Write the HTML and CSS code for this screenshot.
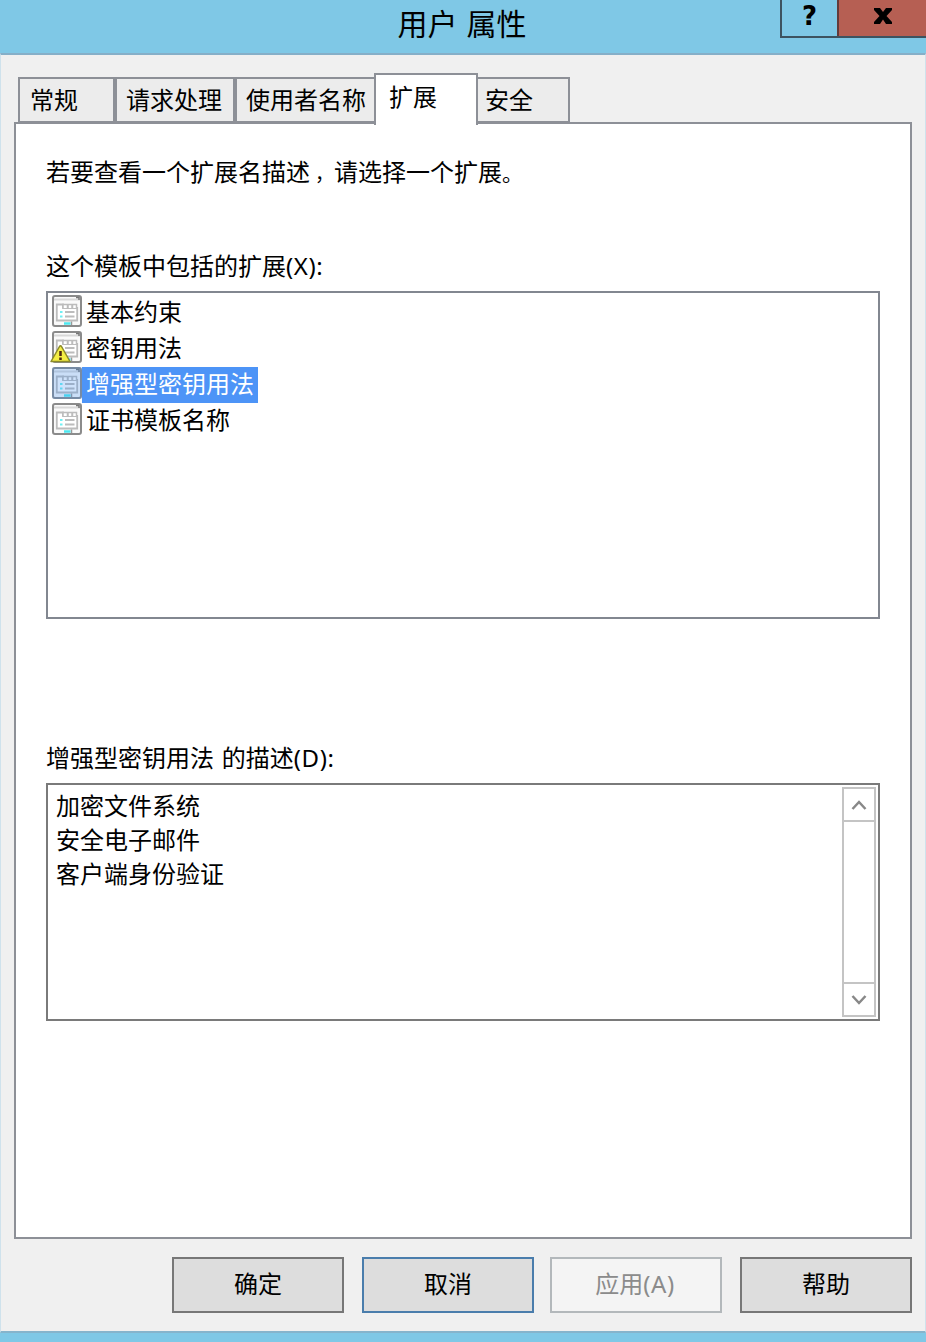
FILE: index.html
```html
<!DOCTYPE html>
<html lang="zh-CN">
	<head>
		<meta charset="utf-8">
		<title>用户 属性</title>
		<link rel="stylesheet" href="styles.css">
	</head>
	<body>
		<!-- shared list icon -->
		<svg class="defs" width="0" height="0">
			<symbol id="ext" viewBox="0 0 30 32">
				<rect x="1" y="1" width="28" height="30" rx="2" fill="#fafafa" stroke="#8b8b8b" stroke-width="2"/>
				<path d="M2 4.500H28" stroke="#d8d8d8" stroke-width="2"/>
				<path d="M24 2.500H27V5" fill="none" stroke="#777" stroke-width="1.500"/>
				<path d="M4.800 9.500H11V13H25.200V25.500H4.800Z" fill="#fff" stroke="#bcbcbc" stroke-width="1.800"/>
				<path d="M11 13V9.500H15.500V13M16 13V9.500H20V13M20.500 13V9.500H24.500V13" fill="#fff" stroke="#bcbcbc" stroke-width="1.500"/>
				<path d="M13 17H22.500M13 21.500H22.500" stroke="#bcbcbc" stroke-width="1.800"/>
				<path d="M8 17H10.500M8 21.500H10.500" stroke="#6ff0f4" stroke-width="2"/>
				<path d="M19.500 26.500V30" stroke="#999" stroke-width="1.500"/>
				<path d="M12 28.500H18.500" stroke="#4ce8f0" stroke-width="2.500"/>
			</symbol>
		</svg>
		<div class="window">
			<div class="titlebar">
				<h1 class="title">用户 属性</h1>
				<div class="controls">
					<button class="ctl help">?</button>
					<button class="ctl close"><svg width="20" height="18" viewBox="0 0 20 18"><path d="M1 1H7L10 5L13 1H19V3L13.500 9L19 15V17H13L10 12.500L7 17H1V15L6.500 9L1 3Z" fill="#000"/></svg></button>
				</div>
			</div>
			<div class="client">
				<div class="tabs">
					<div class="tab general">常规</div>
					<div class="tab request">请求处理</div>
					<div class="tab subject">使用者名称</div>
					<div class="tab active">扩展</div>
					<div class="tab security">安全</div>
				</div>
				<div class="panel">
					<p class="intro">若要查看一个扩展名描述<span class="comma">，</span>请选择一个扩展<span class="stop">。</span></p>
					<p class="label">这个模板中包括的扩展<span class="key">(X):</span></p>
					<ul class="list">
						<li class="item"><svg class="icon"><use href="#ext"/></svg><span>基本约束</span></li>
						<li class="item"><svg class="icon"><use href="#ext"/><path d="M-1 30.500L7.500 15.500Q8.500 14 9.500 15.500L18 30.500Z" fill="#f4ee45" stroke="#8c8a2a" stroke-width="1.500" stroke-linejoin="round"/><path d="M8.500 20V25M8.500 26.500V29" stroke="#4b2810" stroke-width="2.500"/></svg><span>密钥用法</span></li>
						<li class="item selected"><svg class="icon"><use href="#ext"/><rect width="30" height="32" rx="2" fill="#3c8cf0" fill-opacity=".25"/></svg><span>增强型密钥用法</span></li>
						<li class="item"><svg class="icon"><use href="#ext"/></svg><span>证书模板名称</span></li>
					</ul>
					<p class="label desc">增强型密钥用法 的描述<span class="key">(D):</span></p>
					<div class="textbox">
						<div class="lines">
							<p>加密文件系统</p>
							<p>安全电子邮件</p>
							<p>客户端身份验证</p>
						</div>
						<div class="scrollbar">
							<div class="arrow"><svg width="16" height="12" viewBox="0 0 16 12"><path d="M1.500 10L8 3L14.500 10"/></svg></div>
							<div class="arrow"><svg width="16" height="12" viewBox="0 0 16 12"><path d="M1.500 2L8 9L14.500 2"/></svg></div>
						</div>
					</div>
				</div>
				<div class="buttons">
					<button class="button">确定</button>
					<button class="button default">取消</button>
					<button class="button apply" disabled>应用<span class="key">(A)</span></button>
					<button class="button">帮助</button>
				</div>
			</div>
		</div>
	</body>
</html>
```
FILE: styles.css
```css
*{box-sizing: border-box; margin: 0; padding: 0;}
body{font-family: "Noto Sans", "Noto Sans CJK SC", sans-serif; font-size: 24px; line-height: 34px; color: #000;}
button{font: inherit; color: inherit;}
svg{display: block;}
.defs{position: absolute;}

.window{width: 926px; height: 1342px; display: flex; flex-direction: column; background: #7fc8e6;}
.titlebar{height: 53px; display: grid; grid-template-columns: 146px 1fr 146px;}
.title{grid-column: 2; font-size: 30px; font-weight: 400; line-height: 48px; word-spacing: 1px; text-align: center; padding-right: 2px;}
.controls{display: flex; height: 38px; border: 2px solid #3d5360; border-top: 0; border-right: 0;}
.ctl{border: 0; background: #7fc8e6;}
.help{width: 55px; font: bold 26px/30px "DejaVu Sans", sans-serif; padding-bottom: 4px;}
.close{flex: 1; display: flex; justify-content: center; align-items: flex-start; padding: 7px 0 0 1px; background: #b65f53; border-left: 2px solid #633b3a;}

.client{height: 1280px; padding: 18px 13px 0; background: #f0f0f0; border: 1px solid #cfe2ec; border-top: 2px solid #86afc8; border-bottom: 2px solid #86b4cc;}
.tabs{display: flex; align-items: flex-end; height: 52px; margin: 0 4px -3px; position: relative;}
.tab{height: 46px; margin-bottom: 2px; padding: 4px 0 0 9px; border: 2px solid #8d9097; background: #ececec; white-space: nowrap;}
.general{width: 97px; padding-left: 10px;}
.request{width: 120px;}
.subject{width: 140px; border-right: 0;}
.active{width: 104px; height: 52px; margin: 0 0 0 -1px; padding: 5px 0 0 13px; background: #fff; border-bottom: 0;}
.security{width: 92px; padding-left: 7px; border-left: 0;}

.panel{height: 1117px; padding: 31px 30px 0; background: #fff; border: 2px solid #8d9097;}
.intro{height: 34px; margin-bottom: 60px;}
.comma{padding-left: 5px; font-size: 19px;}
.stop{font-size: 21px;}
.label{margin-bottom: 8px; word-spacing: 1.5px;}
.key{letter-spacing: .6px;}
.list{height: 328px; padding: 2px 4px; border: 2px solid #828790; list-style: none;}
.item{display: flex; height: 36px;}
.icon{width: 30px; height: 32px; overflow: visible;}
.item span{padding: 0 4px 2px; line-height: 34px;}
.selected span{background: #4d94f7; color: #fff;}
.desc{margin-top: 122px;}
.textbox{display: flex; justify-content: space-between; height: 238px; padding: 2px; border: 2px solid #7a7a7a;}
.lines{padding: 2px 6px;}
.scrollbar{width: 34px; display: flex; flex-direction: column; justify-content: space-between; border: 2px solid #c4c4c4;}
.arrow{height: 33px; display: flex; align-items: center; justify-content: center; border-bottom: 2px solid #c4c4c4;}
.arrow:last-child{border-bottom: 0; border-top: 2px solid #c4c4c4;}
.arrow path{fill: none; stroke: #888; stroke-width: 2.5;}

.buttons{display: flex; justify-content: flex-end; gap: 18px; margin-top: 18px;}
.button{width: 172px; height: 56px; padding-bottom: 2px; background: #ddd; border: 2px solid #777;}
.default{border-color: #4a7dac;}
.apply{margin-left: -2px; background: #f4f4f4; border-color: #b3b8bb; color: #8b8b8b; padding-right: 2px;}
```
